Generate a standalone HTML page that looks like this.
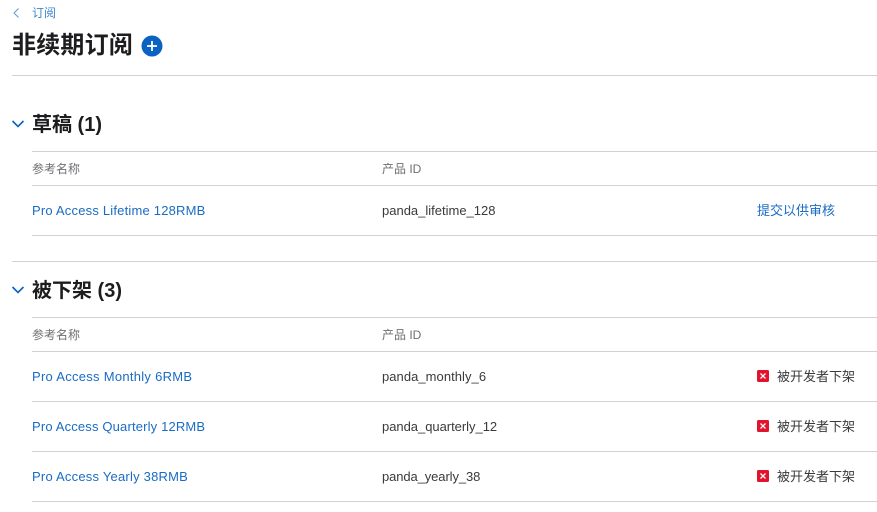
<!DOCTYPE html>
<html><head><meta charset="utf-8">
<style>
html,body{margin:0;padding:0;background:#fff}
body{width:877px;height:512px;overflow:hidden;position:relative;font-family:"Liberation Sans","Noto Sans CJK SC",sans-serif;-webkit-font-smoothing:antialiased}
.t{position:absolute;white-space:nowrap;line-height:20px;font-size:13px;color:#3a3a3c}
.b{color:#1a6cc4}
.g{color:#6e6e73;font-size:12px}
.s{letter-spacing:.2px}
.l{position:absolute;height:1px;background:#d2d2d2;left:32px;width:845px}
.h{position:absolute;white-space:nowrap;font-weight:700;font-size:20px;line-height:28px;color:#1d1d1f}
svg{position:absolute}
</style></head><body>
<svg style="left:12px;top:7px" width="10" height="12" viewBox="0 0 10 12"><path d="M6.500 1.500 L2 6 L6.500 10.500" fill="none" stroke="#5a9ad8" stroke-width="1"/></svg>
<div class="t b" style="left:32px;top:3px;font-size:12px;color:#3f86cf">订阅</div>
<div class="h" style="left:12px;top:32px;font-size:24px;line-height:28px;font-weight:700;letter-spacing:.2px">非续期订阅</div>
<svg style="left:141px;top:35px" width="22" height="22" viewBox="0 0 22 22"><circle cx="11" cy="11" r="10.500" fill="#0b62c0"/><path d="M11 6V16M6 11H16" stroke="#fff" stroke-width="1.800"/></svg>
<div class="l" style="left:12px;width:865px;top:75px"></div>

<svg style="left:11px;top:119px" width="14" height="10" viewBox="0 0 14 10"><path d="M1.500 2 L7 7.500 L12.500 2" fill="none" stroke="#0b62c0" stroke-width="1.600"/></svg>
<div class="h" style="left:32px;top:111px">草稿 (1)</div>
<div class="l" style="top:151px"></div>
<div class="t g" style="left:32px;top:159px">参考名称</div>
<div class="t g" style="left:382px;top:159px">产品 ID</div>
<div class="l" style="top:185px"></div>
<div class="t b s" style="left:32px;top:201px">Pro Access Lifetime 128RMB</div>
<div class="t" style="left:382px;top:201px">panda_lifetime_128</div>
<div class="t b" style="left:757px;top:201px">提交以供审核</div>
<div class="l" style="top:235px"></div>

<div class="l" style="left:12px;width:865px;top:261px"></div>
<svg style="left:11px;top:285px" width="14" height="10" viewBox="0 0 14 10"><path d="M1.500 2 L7 7.500 L12.500 2" fill="none" stroke="#0b62c0" stroke-width="1.600"/></svg>
<div class="h" style="left:32px;top:277px">被下架 (3)</div>
<div class="l" style="top:317px"></div>
<div class="t g" style="left:32px;top:325px">参考名称</div>
<div class="t g" style="left:382px;top:325px">产品 ID</div>
<div class="l" style="top:351px"></div>

<div class="t b" style="left:32px;top:367px;letter-spacing:.28px">Pro Access Monthly 6RMB</div>
<div class="t" style="left:382px;top:367px;letter-spacing:.05px">panda_monthly_6</div>
<svg style="left:757px;top:370px" width="12" height="12" viewBox="0 0 12 12"><rect width="12" height="12" rx="1.500" fill="#e0142c"/><path d="M3.500 3.500L8.500 8.500M8.500 3.500L3.500 8.500" stroke="#fff" stroke-width="1.300"/></svg>
<div class="t" style="left:777px;top:367px">被开发者下架</div>
<div class="l" style="top:401px"></div>

<div class="t b" style="left:32px;top:417px;letter-spacing:.16px">Pro Access Quarterly 12RMB</div>
<div class="t" style="left:382px;top:417px;letter-spacing:-.03px">panda_quarterly_12</div>
<svg style="left:757px;top:420px" width="12" height="12" viewBox="0 0 12 12"><rect width="12" height="12" rx="1.500" fill="#e0142c"/><path d="M3.500 3.500L8.500 8.500M8.500 3.500L3.500 8.500" stroke="#fff" stroke-width="1.300"/></svg>
<div class="t" style="left:777px;top:417px">被开发者下架</div>
<div class="l" style="top:451px"></div>

<div class="t b" style="left:32px;top:467px;letter-spacing:.22px">Pro Access Yearly 38RMB</div>
<div class="t" style="left:382px;top:467px;letter-spacing:-.1px">panda_yearly_38</div>
<svg style="left:757px;top:470px" width="12" height="12" viewBox="0 0 12 12"><rect width="12" height="12" rx="1.500" fill="#e0142c"/><path d="M3.500 3.500L8.500 8.500M8.500 3.500L3.500 8.500" stroke="#fff" stroke-width="1.300"/></svg>
<div class="t" style="left:777px;top:467px">被开发者下架</div>
<div class="l" style="top:501px"></div>
</body></html>
